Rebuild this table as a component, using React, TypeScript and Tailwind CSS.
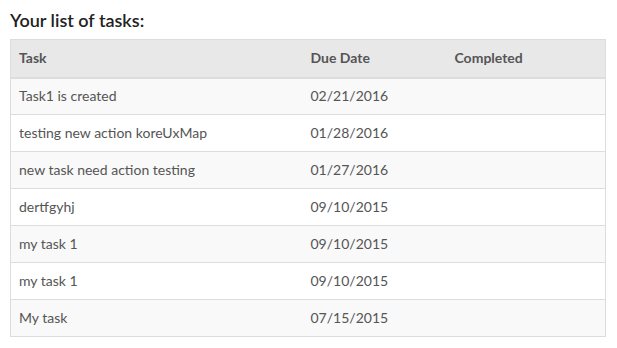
const tasks = [
  { name: 'Task1 is created', due: '02/21/2016' },
  { name: 'testing new action koreUxMap', due: '01/28/2016' },
  { name: 'new task need action testing', due: '01/27/2016' },
  { name: 'dertfgyhj', due: '09/10/2015' },
  { name: 'my task 1', due: '09/10/2015' },
  { name: 'my task 1', due: '09/10/2015' },
  { name: 'My task', due: '07/15/2015' },
]

export default function App() {
  return (
    <div className="bg-white min-h-[348px] font-['Lato',sans-serif] text-[#555]">
      <div className="pl-[10px] pr-[11px] pt-[8px]">
        <h2 className="text-[18px] leading-[24px] font-semibold text-[#222] mb-[7px]">Your list of tasks:</h2>
        <table className="w-[596px] border-collapse border border-[#ddd] text-[14px]">
          <thead>
            <tr className="bg-[#e8e8e9] border-b-2 border-[#ddd]">
              <th className="w-[292px] h-[38px] px-[8px] pb-[2px] text-left font-bold">Task</th>
              <th className="w-[144px] h-[38px] px-[8px] pb-[2px] text-left font-bold">Due Date</th>
              <th className="h-[38px] px-[8px] pb-[2px] text-left font-bold">Completed</th>
            </tr>
          </thead>
          <tbody>
            {tasks.map((t, i) => (
              <tr key={i} className={`border-t border-[#ddd] ${i % 2 === 0 ? 'bg-[#f9f9f9]' : 'bg-white'}`}>
                <td className="h-[37px] px-[8px] pb-[1px]">{t.name}</td>
                <td className="h-[37px] px-[8px] pb-[1px]">{t.due}</td>
                <td className="h-[37px] px-[8px]"></td>
              </tr>
            ))}
          </tbody>
        </table>
      </div>
    </div>
  )
}
